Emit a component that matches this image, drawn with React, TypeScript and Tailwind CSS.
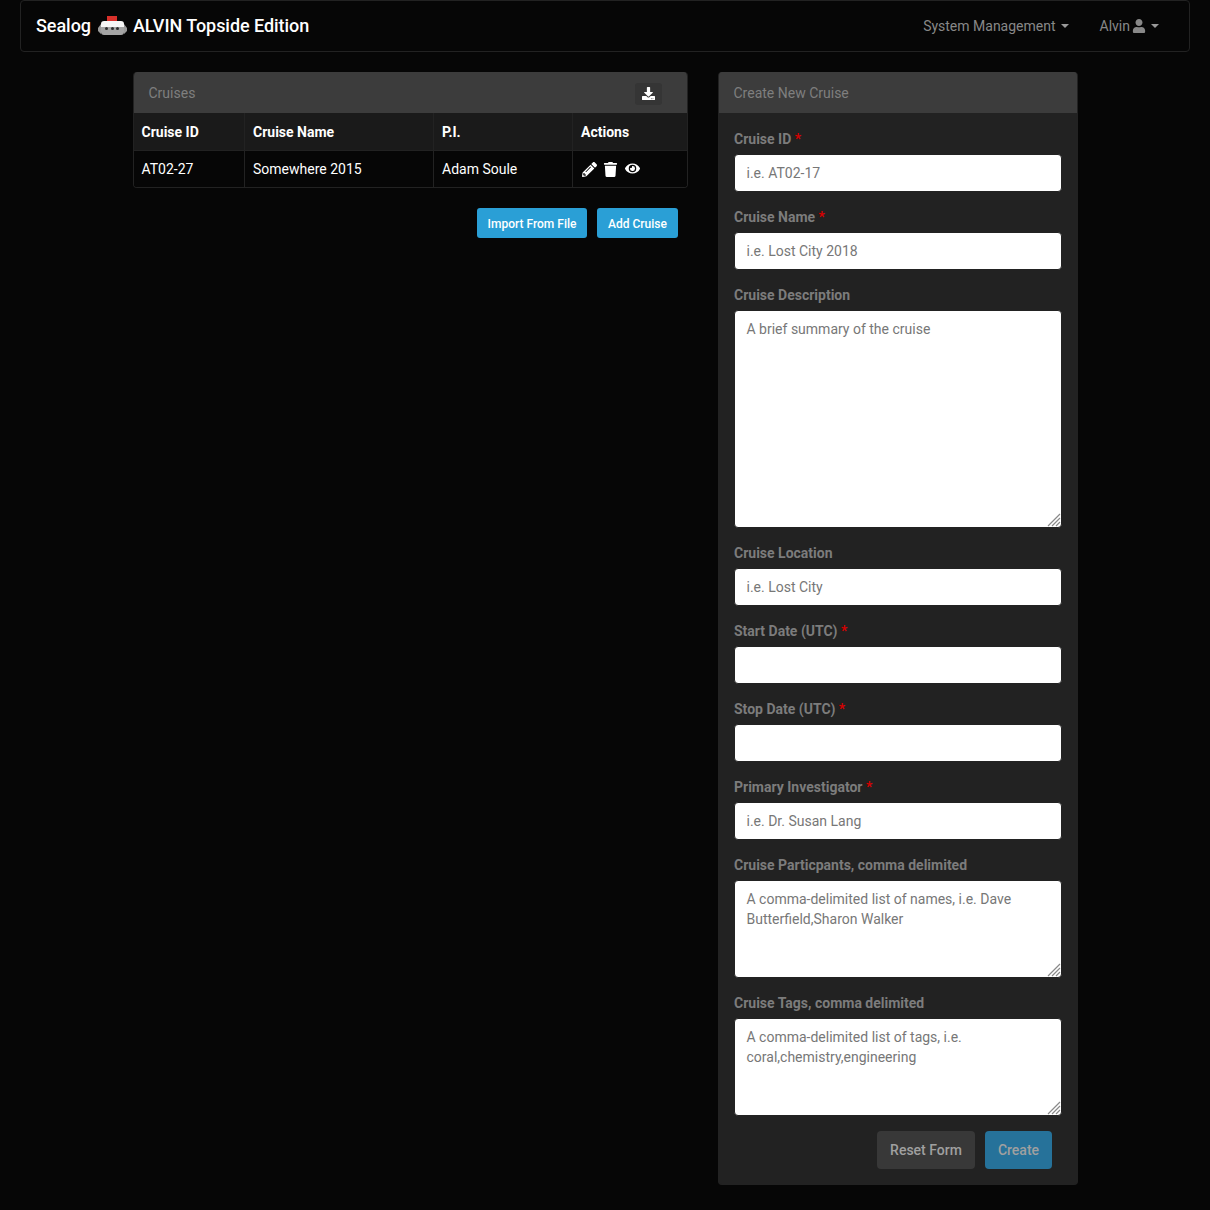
import React from 'react';
import { FaDownload, FaEye, FaPencilAlt, FaTrash, FaUser } from 'react-icons/fa';

function AlvinLogo() {
  return (
    <svg width="29" height="20" viewBox="0 0 29 20" className="mt-[2px] mr-[6px] ml-[7px] shrink-0">
      <rect x="9" y="0" width="10" height="6" fill="#d8302a" />
      <path d="M3 8 Q3 5 6 5 H23 Q26 5 26 8 V12 H3 Z" fill="#f6f6f6" />
      <path d="M3 11 H26 V16 Q26 19 23 19 H6 Q3 19 3 16 Z" fill="#a4a4a4" />
      <path d="M0 12 L3 8 V18 L0 15 Z M29 12 L26 8 V18 L29 15 Z" fill="#9a9a9a" />
      <circle cx="8.5" cy="12.5" r="1.5" fill="#2e2e2e" />
      <circle cx="14.5" cy="12.5" r="1.5" fill="#2e2e2e" />
      <circle cx="19.5" cy="12.5" r="1.5" fill="#2e2e2e" />
    </svg>
  );
}

function Caret() {
  return <span className="ml-[5px] inline-block border-x-[4px] border-t-[4px] border-x-transparent border-t-[#999]" />;
}

function ResizeGrip() {
  return (
    <svg width="14" height="14" viewBox="0 0 14 14" className="pointer-events-none absolute right-[1px] bottom-[1px]">
      <path d="M1 13 L13 1 M5 13 L13 5 M9 13 L13 9" stroke="#8a8a8a" strokeWidth="1.2" fill="none" />
    </svg>
  );
}

interface FieldProps {
  label: string;
  required?: boolean;
  placeholder?: string;
  rows?: 'tall' | 'short';
}

function Field({ label, required, placeholder, rows }: FieldProps) {
  return (
    <div className="mb-[15px]">
      <label className="mb-[5px] block h-[20px] text-[14px] leading-[20px] font-bold text-[#7c7c7c]">
        {label}
        {required && <span className="text-[#d60000]"> *</span>}
      </label>
      {rows ? (
        <div className="relative">
          <textarea
            placeholder={placeholder}
            className={`block w-full resize-none rounded-[4px] border border-[#222] bg-white px-[11.5px] py-[8px] text-[14px] leading-[20px] outline-none placeholder:text-[#777] ${
              rows === 'tall' ? 'h-[218px]' : 'h-[98px]'
            }`}
          />
          <ResizeGrip />
        </div>
      ) : (
        <input
          placeholder={placeholder}
          className="block h-[38px] w-full rounded-[4px] border border-[#222] bg-white px-[11.5px] text-[14px] outline-none placeholder:text-[#777]"
        />
      )}
    </div>
  );
}

export default function App() {
  return (
    <div className="min-h-[1210px] bg-[#060606] font-['Roboto',sans-serif] text-[14px] text-white">
      <div className="px-[20px]">
        <nav className="flex h-[52px] items-center justify-between rounded-[4px] border border-[#222] bg-[#060606] pr-[30px] pl-[15px]">
          <div className="flex items-center pb-[2px] text-[18px] font-medium tracking-[-0.05px]">
            <span>Sealog</span>
            <AlvinLogo />
            <span>ALVIN Topside Edition</span>
          </div>
          <div className="flex items-center text-[#888]">
            <span className="flex items-center">
              System Management
              <Caret />
            </span>
            <span className="ml-[31px] flex items-center">
              Alvin
              <FaUser className="ml-[2px] text-[14px]" />
              <Caret />
            </span>
          </div>
        </nav>
      </div>

      <div className="mt-[20px] flex items-start pl-[133px]">
        <div className="w-[555px]">
          <div className="overflow-hidden rounded-[4px] border border-t-0 border-[#222]">
            <div className="flex h-[41px] items-center justify-between bg-[#3c3c3c] pt-[2px] pr-[25px] pl-[14.5px] text-[#7f7f7f]">
              <span>Cruises</span>
              <span className="flex h-[22px] w-[27px] items-center justify-center rounded-[3px] bg-[#353535] text-[13px] text-white">
                <FaDownload />
              </span>
            </div>
            <div className="grid grid-cols-[111px_189px_139px_1fr]">
              {['Cruise ID', 'Cruise Name', 'P.I.', 'Actions'].map((h, i) => (
                <div
                  key={h}
                  className={`flex h-[38px] items-center border-b border-[#222] bg-[#1a1a1a] pt-[1px] font-bold ${
                    i < 3 ? 'border-r' : ''
                  } ${i === 0 ? 'px-[7.5px]' : 'px-[8px]'}`}
                >
                  {h}
                </div>
              ))}
              {['AT02-27', 'Somewhere 2015', 'Adam Soule'].map((c, i) => (
                <div
                  key={c}
                  className={`flex h-[36px] items-center border-r border-[#222] bg-[#060606] ${
                    i === 0 ? 'px-[7.5px]' : 'px-[8px]'
                  }`}
                >
                  {c}
                </div>
              ))}
              <div className="flex h-[36px] items-center gap-[6px] bg-[#060606] px-[9px]">
                <FaPencilAlt className="text-[15px]" />
                <FaTrash className="text-[15px]" />
                <FaEye className="-mt-[1px] ml-[1px] text-[15px]" />
              </div>
            </div>
          </div>
          <div className="mt-[20px] flex justify-end gap-[10px] pr-[10px]">
            <button className="h-[30px] w-[110px] rounded-[3px] bg-[#2a9fd6] pt-[1px] text-[12px] font-medium text-white">
              Import From File
            </button>
            <button className="h-[30px] w-[81px] rounded-[3px] bg-[#2a9fd6] pt-[1px] text-[12px] font-medium text-white">
              Add Cruise
            </button>
          </div>
        </div>

        <div className="ml-[30px] w-[360px] overflow-hidden rounded-[4px] border border-t-0 border-[#222] bg-[#222]">
          <div className="flex h-[41px] items-center bg-[#3c3c3c] px-[14.5px] pt-[2px] text-[#7f7f7f]">Create New Cruise</div>
          <div className="pt-[16px] pr-[15px] pl-[15px]">
            <Field label="Cruise ID" required placeholder="i.e. AT02-17" />
            <Field label="Cruise Name" required placeholder="i.e. Lost City 2018" />
            <Field label="Cruise Description" placeholder="A brief summary of the cruise" rows="tall" />
            <Field label="Cruise Location" placeholder="i.e. Lost City" />
            <Field label="Start Date (UTC)" required />
            <Field label="Stop Date (UTC)" required />
            <Field label="Primary Investigator" required placeholder="i.e. Dr. Susan Lang" />
            <Field
              label="Cruise Particpants, comma delimited"
              placeholder="A comma-delimited list of names, i.e. Dave Butterfield,Sharon Walker"
              rows="short"
            />
            <Field
              label="Cruise Tags, comma delimited"
              placeholder="A comma-delimited list of tags, i.e. coral,chemistry,engineering"
              rows="short"
            />
            <div className="flex justify-end gap-[10px] pr-[10px] pb-[15px]">
              <button className="h-[38px] w-[98px] rounded-[4px] bg-[#383838] font-medium text-[#a0a0a0]">Reset Form</button>
              <button className="h-[38px] w-[67px] rounded-[4px] bg-[#26729a] font-medium text-[#a0a0a0]">Create</button>
            </div>
          </div>
        </div>
      </div>
    </div>
  );
}
